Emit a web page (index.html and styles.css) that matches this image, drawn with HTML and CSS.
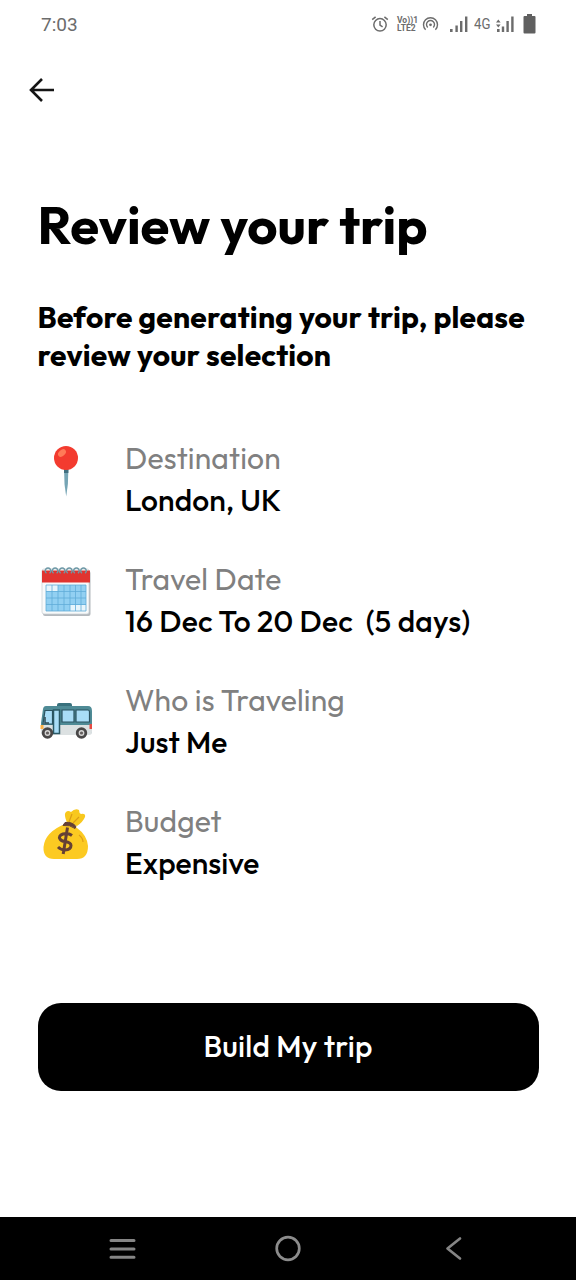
FILE: index.html
```html
<!DOCTYPE html>
<html lang="en">
<head>
<meta charset="utf-8">
<title>Review your trip</title>
<link rel="stylesheet" href="styles.css">
</head>
<body>
<div class="phone">
  <header class="status">
    <span class="time">7:03</span>
    <div class="indicators">
      <svg class="alarm" width="18" height="18" viewBox="0 0 18 18" fill="none" stroke="#6c6c6c" stroke-width="1.5"><circle cx="9" cy="9.8" r="6.2"/><path d="M9 6v4l2.6 1.8M1.2 4.6 4.6 1.8M16.8 4.6l-3.4-2.8"/></svg>
      <div class="volte"><span>Vo))1</span><span>LTE2</span></div>
      <svg class="hotspot" width="17" height="16" viewBox="0 0 17 16" fill="none" stroke="#6c6c6c" stroke-width="1.4"><path d="M3.6 13.8a7 7 0 1 1 9.8 0M5.7 11.4a4 4 0 1 1 5.6 0"/><circle cx="8.5" cy="8.8" r="1.4" fill="#6c6c6c" stroke="none"/></svg>
      <svg class="signal" width="18" height="16" viewBox="0 0 18 16" fill="#6c6c6c"><path d="M0 13h2.6v3H0zM5.4 9.5h2.4V16H5.4zM10 5h2.4v11H10zM15 .5h2.4V16H15z"/></svg>
      <span class="net">4G</span>
      <svg class="signal-two" width="18" height="16" viewBox="0 0 18 16" fill="#6c6c6c"><path d="M1 13h2.6v3H1zM5.8 10.5h2.4V16H5.8zM10.4 5h2.4v11h-2.4zM15.2 .5h2.4V16h-2.4zM0 6.500 2.300 3.500 4.600 6.500zM0 8.500h4.600L2.300 11.500z"/></svg>
      <svg class="battery" width="13" height="20" viewBox="0 0 13 20" fill="#606060"><path d="M4 0h5v2h2.500q1 0 1 1v15.500q0 1-1 1h-10q-1 0-1-1V3q0-1 1-1H4z"/></svg>
    </div>
  </header>
  <nav class="topbar">
    <svg width="26" height="26" viewBox="0 0 26 26" fill="none" stroke="#151515" stroke-width="2.6"><path d="M25 13H2.500M13 2 2 13l11 11"/></svg>
  </nav>
  <main class="content">
    <h1 class="title">Review your trip</h1>
    <h2 class="subtitle">Before generating your trip, please<br>review your selection</h2>
    <section class="list">
      <div class="row">
        <svg class="icon" width="56" height="60" viewBox="0 0 56 60"><path d="M26 23h4.400l-.5 16-1.700 12.500L26.500 39z" fill="#76a5b5"/><path d="M26 23h4.400v5H26z" fill="#416f80"/><circle cx="28" cy="13" r="12" fill="#f33b2f"/><ellipse cx="24" cy="8" rx="4.500" ry="3" transform="rotate(-42 24 8)" fill="#ff7b58"/></svg>
        <div class="texts"><span class="label">Destination</span><span class="value">London, UK</span></div>
      </div>
      <div class="row">
        <svg class="icon" width="56" height="60" viewBox="0 0 56 60"><rect x="5" y="5" width="47.500" height="45" rx="2" fill="#b4b9bd"/><rect x="4" y="3" width="47" height="45" rx="2" fill="#f8fafb" stroke="#c9cfd3" stroke-width=".7"/><path d="M4 4.500h48v12H4z" fill="#e03430"/><path d="M8 19h40v26H8z" fill="#92d0f2"/><path d="M8 19h12v6H8zM32 39h16v6H32z" fill="#e8f6fc"/><path d="M8 19h40v26H8zM8 25.500h40M8 32h40M8 38.500h40M14 19v26M20 19v26M26 19v26M32 19v26M37.500 19v26M43 19v26" fill="none" stroke="#61acd8" stroke-width=".8"/><g fill="none" stroke="#6d98a6" stroke-width="1.400"><path d="M8.500 7.200a2.800 2.800 0 1 1 3 0M15.600 7.200a2.800 2.800 0 1 1 3 0M22.700 7.200a2.800 2.800 0 1 1 3 0M29.800 7.200a2.800 2.800 0 1 1 3 0M36.900 7.200a2.800 2.800 0 1 1 3 0M44 7.200a2.800 2.800 0 1 1 3 0"/></g></svg>
        <div class="texts"><span class="label">Travel Date</span><span class="value value-date">16 Dec To 20 Dec&nbsp; (5 days)</span></div>
      </div>
      <div class="row">
        <svg class="icon icon-low" width="56" height="60" viewBox="0 0 56 60"><rect x="19" y="15" width="15" height="6" rx="2" fill="#39717d"/><path d="M8 18h42q4 0 4 5v20q0 3-3 3H5q-2 0-2-3v-8l2-14q.5-3 3-3z" fill="#4f8b96"/><path d="M3 37h51v7q0 3-3 3H5q-2 0-2-3z" fill="#dce1e2"/><path d="M7 22.500h7.500V36H5zM24 22h12v12H24zM38 22h12q1.500 0 1.500 2v10H38z" fill="#a9ddf7" stroke="#2b5260" stroke-width="1.200"/><path d="M15.500 22h6v23.500h-6z" fill="#a9ddf7" stroke="#2b5966" stroke-width="1.500"/><path d="M7 29v6h4" stroke="#2e4850" stroke-width="1.500" fill="none"/><rect x="2.500" y="37" width="3" height="4" fill="#ffb347"/><rect x="51.500" y="36" width="2.500" height="5" fill="#e64a42"/><g fill="#d6d5d4" stroke="#494747" stroke-width="2.800"><circle cx="9.500" cy="45" r="4.300"/><circle cx="43.500" cy="45" r="4.300"/></g><g fill="#635e5d"><circle cx="9.500" cy="45" r="1.600"/><circle cx="43.500" cy="45" r="1.600"/></g></svg>
        <div class="texts"><span class="label">Who is Traveling</span><span class="value">Just Me</span></div>
      </div>
      <div class="row">
        <svg class="icon icon-low" width="56" height="60" viewBox="0 0 56 60"><path d="M29 14C27 8 26 5 28 3q2-2 5 0 4-4 8-2 0 3 2 4 5-1 4 3-2 5-8 9z" fill="#f8c81e"/><path d="m31 13 3-8M35 14l6-6" stroke="#dc9c16" stroke-width="1.200"/><path d="M27 15q7-1 12 4 10 7 11 18 0 13-11 13H16Q5 50 5.500 38 7 23 27 15z" fill="#fcca22"/><path d="M41 26q4 3 4 7" fill="none" stroke="#df9d17" stroke-width="1.200"/><path d="M27 13.500q7-1 11 4l-1 2q-5-4-12-3z" fill="#654035" stroke="#654035"/><path d="M34 26.500q-4-3-9-1.500-5 2-3 5 1 2 5 2.500 6 1 6 4 0 4-6 4.500-4 0-7-3M29.500 18.500 25.200 45" fill="none" stroke="#654035" stroke-width="3"/></svg>
        <div class="texts"><span class="label">Budget</span><span class="value">Expensive</span></div>
      </div>
    </section>
    <button class="build">Build My trip</button>
  </main>
  <footer class="navbar">
    <svg width="28" height="28" viewBox="0 0 28 28" stroke="#858585" stroke-width="3" stroke-linecap="round"><path d="M3 5.500h23M3 14h23M3 22.300h23"/></svg>
    <svg width="28" height="28" viewBox="0 0 28 28" fill="none" stroke="#8c8c8c" stroke-width="2.700"><circle cx="14" cy="13.500" r="11.300"/></svg>
    <svg width="28" height="28" viewBox="0 0 28 28" fill="none" stroke="#858585" stroke-width="2.700" stroke-linecap="round" stroke-linejoin="round"><path d="M20 3.500 7.500 13.500 20 23.500"/></svg>
  </footer>
</div>
</body>
</html>
```
FILE: styles.css
```css
* { box-sizing: border-box; }
body { margin: 0; background: #fff; color: #000; font-family: Outfit, Inter, "Open Sans", sans-serif; }
svg { display: block; flex: none; }
.phone { width: 576px; height: 1280px; display: flex; flex-direction: column; background: #fff; }
.status { height: 48px; padding: 0 40px 0 41px; display: flex; align-items: center; justify-content: space-between; color: #6c6c6c; font-family: Roboto, sans-serif; }
.time { font-size: 19px; line-height: 48px; padding-top: 1px; }
.indicators { display: flex; align-items: center; }
.alarm { margin-right: 8px; }
.volte { width: 20px; font-size: 8.5px; font-weight: 700; line-height: 8px; margin-right: 5px; display: flex; flex-direction: column; white-space: nowrap; }
.hotspot { margin-right: 11px; }
.net { font-size: 15px; margin: 0 4px 0 6px; width: 18px; transform: scaleX(.88); transform-origin: left; }
.battery { margin-left: 9px; }
.topbar { height: 84px; padding: 29px 0 0 29px; }
.content { flex: 1; padding: 60px 37.5px 0; white-space: nowrap; }
.title { margin: 0; font-size: 52.5px; font-weight: 700; line-height: 66px; }
.subtitle { margin: 40px 0 0; font-size: 30px; font-weight: 700; line-height: 38px; letter-spacing: .21px; }
.list { margin-top: 64px; display: flex; flex-direction: column; gap: 38px; }
.row { height: 83px; display: flex; gap: 31.5px; }
.icon { margin-top: 7px; }
.icon-low { margin-top: 8px; }
.texts { display: flex; flex-direction: column; align-items: flex-start; font-size: 30px; line-height: 41.5px; }
.label { color: #808080; font-weight: 400; letter-spacing: .18px; }
.value { font-weight: 500; line-height: 40.5px; letter-spacing: .08px; }
.value-date { letter-spacing: .24px; }
.build { display: flex; align-items: center; justify-content: center; width: 501px; height: 88px; margin-top: 119px; padding: 0 0 2px; border: 0; border-radius: 23px; background: #000; color: #fff; font: inherit; font-size: 30px; font-weight: 500; letter-spacing: .22px; }
.navbar { height: 63px; background: #000; display: flex; align-items: center; justify-content: space-between; padding: 0 108px; }
```
